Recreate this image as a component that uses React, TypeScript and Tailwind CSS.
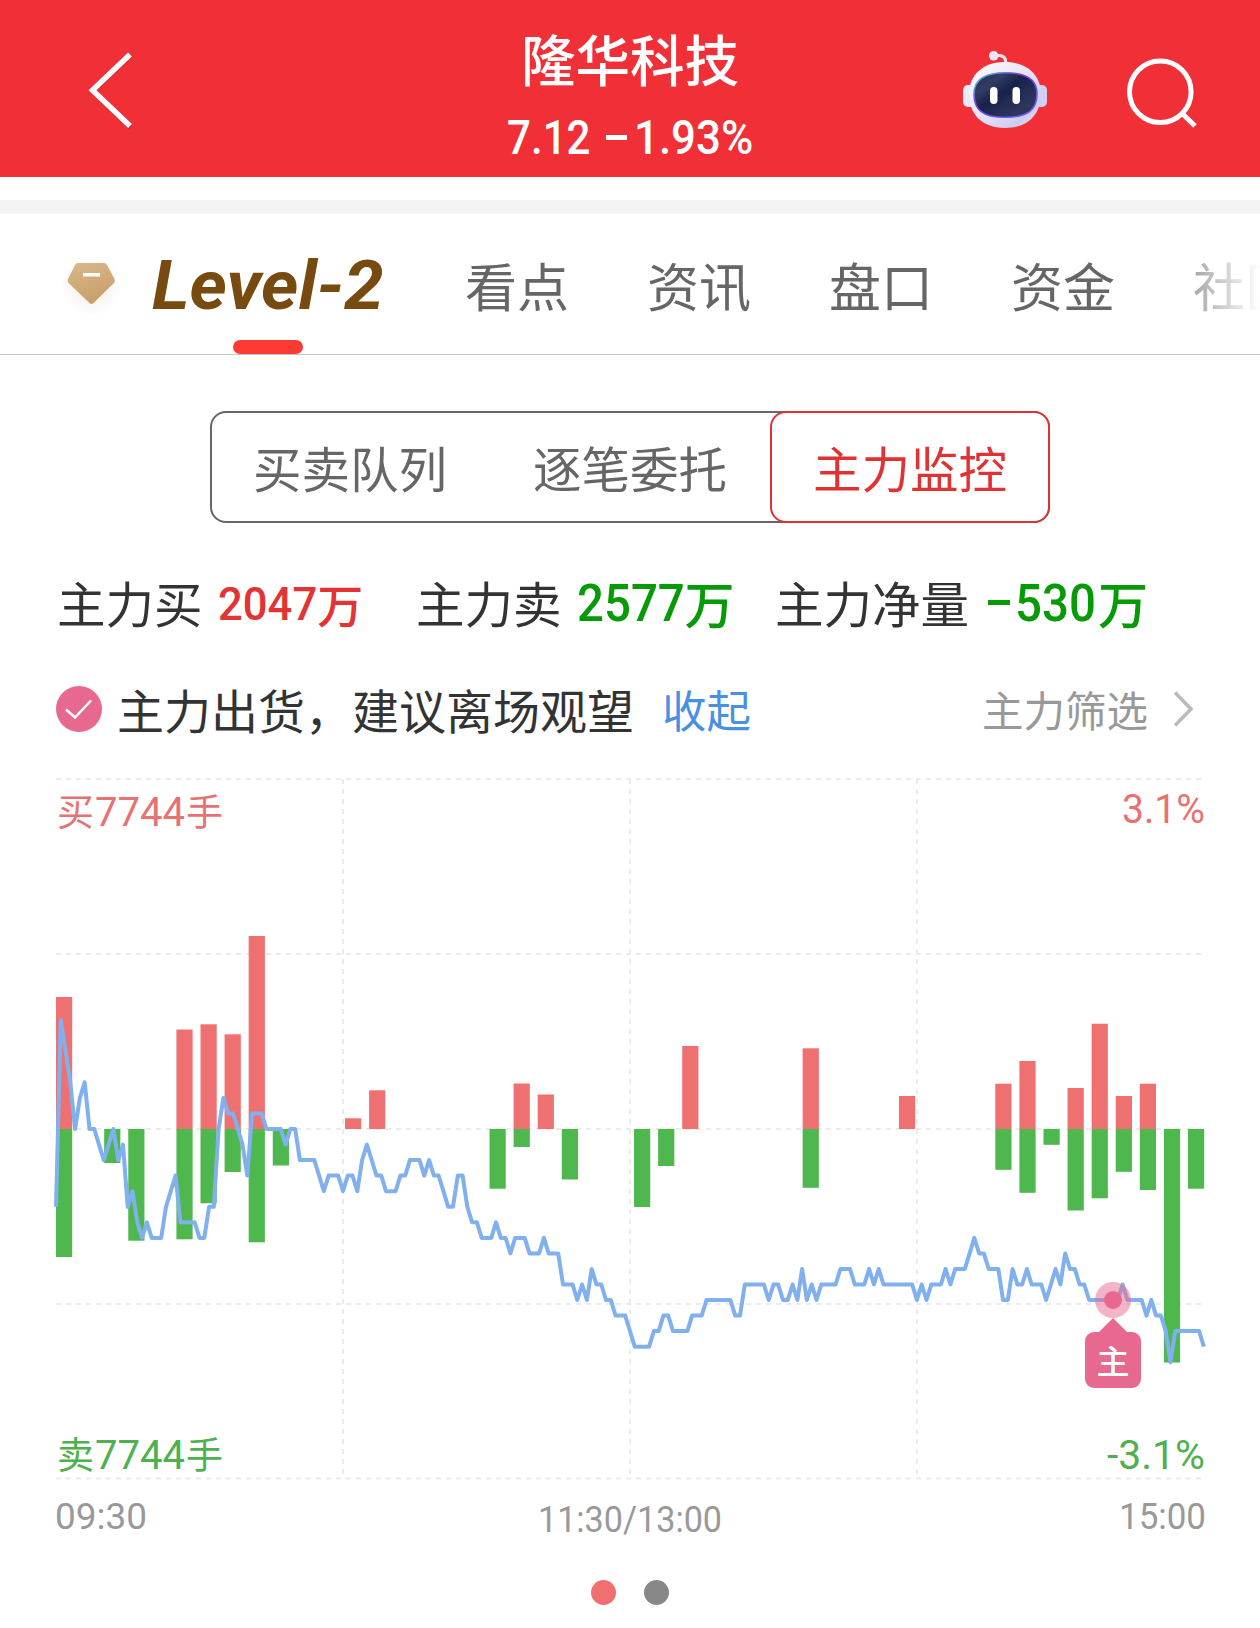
import React from "react";

const CJK = "font-['Noto_Sans_CJK_SC',sans-serif]";
const NUM = "font-['Roboto','Noto_Sans_CJK_SC',sans-serif]";

/* Price change per minute, in grid ticks from the previous close */
const ticks = [
  -5, 7, 5, 3, 0, 2, 3, 0, 0, -1, -2, -1, 0, -2, -1, -5, -4, -6, -7, -6,
  -7, -7, -7, -5, -4, -3, -6, -6, -6, -6, -7, -7, -5, -5, 0, 2, 1, 1, 0, -1,
  -3, 1, 1, 1, 0, 0, 0, 0, -1, 0, 0, -2, -2, -2, -2, -3, -4, -3, -3, -3,
  -4, -3, -3, -4, -2, -1, -2, -3, -3, -4, -4, -4, -3, -3, -2, -2, -2, -3, -2, -3,
  -3, -4, -5, -5, -3, -3, -5, -6, -6, -7, -7, -7, -6, -7, -7, -8, -7, -7, -7, -8,
  -8, -8, -7, -8, -8, -8, -10, -10, -10, -11, -10, -11, -9, -10, -10, -11, -11, -12, -12, -12,
  -13, -14, -14, -14, -14, -13, -13, -12, -12, -13, -13, -13, -13, -12, -12, -12, -11, -11, -11, -11,
  -11, -11, -12, -12, -10, -10, -10, -10, -10, -11, -10, -10, -11, -11, -10, -11, -9, -11, -10, -11,
  -10, -10, -10, -10, -9, -9, -9, -10, -10, -10, -9, -10, -9, -10, -10, -10, -10, -10, -10, -10,
  -11, -10, -11, -10, -10, -10, -9, -10, -9, -9, -9, -8, -7, -8, -8, -9, -9, -9, -11, -11,
  -9, -10, -10, -9, -10, -10, -10, -11, -10, -9, -10, -8, -9, -9, -10, -10, -11, -11, -11, -11,
  -11, -11, -11, -10, -11, -11, -11, -11, -12, -11, -12, -12, -13, -15, -13, -13, -13, -13, -13, -13,
  -14,
];

/* [slot, buy height, sell height] */
const bars: [number, number, number][] = [
  [0, 132, 128], [2, 0, 34], [3, 0, 111.7], [5, 99.5, 110.3], [6, 104.7, 74.3],
  [7, 94.7, 43], [8, 193, 113.3], [9, 0, 36.5], [12, 10.7, 0], [13, 38.7, 0],
  [18, 0, 59.7], [19, 45.5, 18], [20, 34.5, 0], [21, 0, 50.5], [24, 0, 78],
  [25, 0, 37], [26, 83, 0], [31, 80.7, 58.8], [35, 33, 0], [39, 45.3, 40.8],
  [40, 68, 63.8], [41, 0, 15.8], [42, 41, 81.5], [43, 105.3, 69.3], [44, 33, 42.8],
  [45, 45.3, 61], [46, 0, 233.5], [47, 0, 59.7],
];

const MID = 350;
const linePoints = ticks
  .map((t, i) => `${(i * 4.783).toFixed(1)},${(MID - t * 15.55).toFixed(1)}`)
  .join(" ");

function Robot() {
  return (
    <svg width="90" height="84" viewBox="960 48 90 84" className="block">
      <defs>
        <linearGradient id="shell" x1="0" y1="0" x2="1" y2="1">
          <stop offset="0" stopColor="#ffffff" />
          <stop offset="0.5" stopColor="#e6e2f5" />
          <stop offset="0.8" stopColor="#cfcbee" />
          <stop offset="1" stopColor="#f0edfb" />
        </linearGradient>
        <linearGradient id="rim" x1="0" y1="0" x2="1" y2="1">
          <stop offset="0" stopColor="#5fd6de" />
          <stop offset="0.4" stopColor="#7a35d8" />
          <stop offset="0.75" stopColor="#5b5cf0" />
          <stop offset="1" stopColor="#8a48e0" />
        </linearGradient>
        <linearGradient id="visor" x1="0" y1="0" x2="1" y2="1">
          <stop offset="0" stopColor="#222d52" />
          <stop offset="0.25" stopColor="#333c62" />
          <stop offset="0.45" stopColor="#17224b" />
          <stop offset="0.8" stopColor="#2f375f" />
          <stop offset="1" stopColor="#1d2550" />
        </linearGradient>
      </defs>
      <path d="M994 55.500h5c4.500 0 7 3 7 8" fill="none" stroke="#f3e9f7" strokeWidth="3.200" />
      <circle cx="993.700" cy="55.800" r="4.800" fill="#ece6f6" />
      <rect x="963" y="85" width="12" height="22" rx="5" fill="#ebe8f7" />
      <rect x="1035" y="85" width="12" height="22" rx="5" fill="#d3cff0" />
      <path d="M1005 62c22 0 36 13 36 32s-12 34-36 34-36-15-36-34 14-32 36-32z" fill="url(#shell)" />
      <path d="M1005.500 72.800c22 0 31.500 7 31.500 21 0 15-8 23.500-31.500 23.500S974 109 974 94c0-14 9.500-21.200 31.500-21.200z" fill="url(#visor)" stroke="url(#rim)" strokeWidth="1.600" />
      <rect x="990" y="87" width="7.500" height="17" rx="3.700" fill="#fff" />
      <rect x="1012.500" y="87" width="7.500" height="17" rx="3.700" fill="#fff" />
    </svg>
  );
}

function Header() {
  return (
    <header className="flex h-[177px] items-start bg-[#f12f37] text-white">
      <div className="w-[420px] pt-[48px] pl-[84px]">
        <svg width="56" height="84" viewBox="84 48 56 84" className="block">
          <path d="M130.500 55.500L93.500 92L130.500 128" fill="none" stroke="#b8232b" strokeOpacity="0.5" strokeWidth="5" />
          <path d="M130 54.500L92.500 90.300L130 126" fill="none" stroke="#fff" strokeWidth="5.500" />
        </svg>
      </div>
      <div className="flex w-[420px] flex-col items-center">
        <h1 className={`mt-[30px] text-[54.500px] leading-[56px] font-medium ${CJK}`}>隆华科技</h1>
        <div className={`mt-[27px] flex h-[50px] w-[246px] items-center text-[49px] leading-[50px] font-medium whitespace-nowrap ${NUM}`}>
          <span className="w-[99px]"><span className="inline-block origin-left scale-x-[0.86]">7.12</span></span>
          <span className="mb-[2px] h-[5px] w-[21px] bg-white" />
          <span className="ml-[7px] w-[116px]"><span className="inline-block origin-left scale-x-[0.895]">1.93%</span></span>
        </div>
      </div>
      <div className="flex w-[420px] items-start pt-[48px] pl-[120px]">
        <Robot />
        <svg width="80" height="84" viewBox="1122 48 80 84" className="ml-[72px] block">
          <circle cx="1160.300" cy="91.800" r="30.800" fill="none" stroke="#fff" strokeWidth="5" />
          <path d="M1182.500 113.700L1195 126" stroke="#fff" strokeWidth="5" />
        </svg>
      </div>
    </header>
  );
}

function Tabs() {
  return (
    <nav className="relative flex h-[141px] overflow-hidden border-b border-[#c4c4c4]">
      <div className="flex w-[465px] shrink-0 items-start pl-[56px]">
        <svg width="72" height="72" viewBox="56 248 72 72" className="mt-[34px] block">
          <defs>
            <linearGradient id="gem" x1="0" y1="0" x2="0.300" y2="1">
              <stop offset="0" stopColor="#d8b88c" />
              <stop offset="1" stopColor="#c9a06a" />
            </linearGradient>
            <radialGradient id="glow">
              <stop offset="0" stopColor="#f1ebe3" />
              <stop offset="1" stopColor="#ffffff" />
            </radialGradient>
          </defs>
          <circle cx="91" cy="286" r="30" fill="url(#glow)" />
          <path d="M78 263h26q2 0 3 2l7.500 14q1 2-.5 4l-20.500 20q-2 2-4 0L68.500 283q-1.500-2-.5-4l7-14q1-2 3-2z" fill="url(#gem)" />
          <rect x="83" y="273" width="17" height="3.500" fill="#fff" />
        </svg>
        <span className="mt-[37px] ml-[24px] origin-left scale-x-[1.05] text-[68px] leading-[70px] font-bold whitespace-nowrap text-[#774b10] italic font-['Roboto',sans-serif]">Level-2</span>
      </div>
      <div className={`mt-[43px] flex gap-[78px] text-[52px] leading-[56px] whitespace-nowrap text-[#666] ${CJK}`}>
        <span>看点</span>
        <span>资讯</span>
        <span>盘口</span>
        <span>资金</span>
        <span>社区</span>
      </div>
      <div className="absolute top-0 right-0 h-[139px] w-[70px] bg-linear-to-r from-white/40 to-white" />
      <div className="absolute bottom-0 left-[233px] h-[14px] w-[70px] rounded-full bg-[#fb3a33]" />
    </nav>
  );
}

function Segments() {
  return (
    <div className={`mx-auto mt-[56px] flex h-[112px] w-[840px] rounded-[16px] bg-white text-[48.500px] leading-none text-[#666] shadow-[inset_0_0_0_2px_#666] ${CJK}`}>
      <div className="flex w-[280px] items-center justify-center">买卖队列</div>
      <div className="flex w-[280px] items-center justify-center">逐笔委托</div>
      <div className="flex w-[280px] items-center justify-center rounded-[16px] border-2 border-[#dd3333] bg-white text-[#e03232]">主力监控</div>
    </div>
  );
}

function Stat({ label, value, unit, tone, minus, width }: { label: string; value: string; unit: string; tone: string; minus?: boolean; width: string }) {
  return (
    <div className={`flex items-center whitespace-nowrap ${width}`}>
      <span className={`text-[48.500px] text-[#333] ${CJK}`}>{label}</span>
      <span className={`ml-[15px] flex items-center text-[51px] font-medium ${tone}`}>
        {minus && <span className="mr-[5px] ml-[4px] h-[5px] w-[22px] bg-current" />}
        <span className={`inline-block origin-left ${minus ? "w-[83px]" : "w-[108px]"}`}>
          <span className={`inline-block origin-left scale-x-[0.93] ${NUM}`}>{value}</span>
        </span>
        <span className={`text-[50px] ${CJK}`}>{unit}</span>
      </span>
    </div>
  );
}

function Chart() {
  return (
    <svg width="1260" height="780" viewBox="-56 -4 1260 780" className="block">
      <g stroke="#ebebeb" strokeWidth="2" strokeDasharray="5 5">
        {[0, 175, 350, 525, 699.500].map((y) => (
          <path key={y} d={`M0 ${y}H1148`} />
        ))}
        {[287, 574, 861].map((x) => (
          <path key={x} d={`M${x} 0V700`} />
        ))}
      </g>
      {bars.map(([k, up, down]) => (
        <g key={k}>
          <rect x={k * 24.085} y={MID - up} width="16.200" height={up} fill="#ef7070" />
          <rect x={k * 24.085} y={MID} width="16.200" height={down} fill="#4eb74e" />
        </g>
      ))}
      <polyline points={linePoints} fill="none" stroke="#80b0ee" strokeWidth="4" strokeLinejoin="round" />
      <circle cx="1057" cy="521" r="18" fill="#e8698f" fillOpacity="0.5" />
      <circle cx="1057" cy="521" r="9" fill="#e8698f" />
      <path d="M1057 539L1072 554H1042z" fill="#e8698f" />
      <rect x="1029" y="553" width="56" height="56" rx="9" fill="#e8698f" />
      <text x="1057" y="595" textAnchor="middle" fontSize="33" fontWeight="500" fill="#fff" className={CJK}>主</text>
      <g fill="#e87272" className={CJK}>
        <text x="1" y="47" fontSize="37">买</text>
        <text x="39" y="47" fontSize="40" textLength="90" lengthAdjust="spacingAndGlyphs" className="font-['Roboto',sans-serif]">7744</text>
        <text x="130" y="47" fontSize="37">手</text>
        <text x="1149" y="44" fontSize="41" textAnchor="end" textLength="83" lengthAdjust="spacingAndGlyphs" className="font-['Roboto',sans-serif]">3.1%</text>
      </g>
      <g fill="#4eb04e" className={CJK}>
        <text x="1" y="690" fontSize="37">卖</text>
        <text x="39" y="690" fontSize="40" textLength="90" lengthAdjust="spacingAndGlyphs" className="font-['Roboto',sans-serif]">7744</text>
        <text x="130" y="690" fontSize="37">手</text>
        <text x="1149" y="690" fontSize="41" textAnchor="end" textLength="98" lengthAdjust="spacingAndGlyphs" className="font-['Roboto',sans-serif]">-3.1%</text>
      </g>
      <g fill="#999" fontSize="37" className="font-['Roboto',sans-serif]">
        <text x="-1" y="750" textLength="92" lengthAdjust="spacingAndGlyphs">09:30</text>
        <text x="574" y="753" textAnchor="middle" textLength="184" lengthAdjust="spacingAndGlyphs">11:30/13:00</text>
        <text x="1150" y="750" textAnchor="end" textLength="87" lengthAdjust="spacingAndGlyphs">15:00</text>
      </g>
    </svg>
  );
}

export default function App() {
  return (
    <div className="h-[1628px] w-[1260px] overflow-hidden bg-white">
      <Header />
      <div className="mt-[23px] h-[14px] bg-[#f4f4f4]" />
      <Tabs />
      <Segments />
      <div className="mt-[47px] flex h-[64px] pl-[57px] leading-[64px]">
        <Stat label="主力买" value="2047" unit="万" tone="text-[#e23434] scale-[0.92] origin-left" width="w-[359px]" />
        <Stat label="主力卖" value="2577" unit="万" tone="text-[#069a06]" width="w-[359px]" />
        <Stat label="主力净量" value="530" unit="万" tone="text-[#069a06]" minus width="w-[400px]" />
      </div>
      <div className={`mt-[43px] flex h-[64px] items-center pr-[64px] pl-[56px] leading-[64px] whitespace-nowrap ${CJK}`}>
        <svg width="46" height="46" viewBox="0 0 46 46" className="block shrink-0">
          <circle cx="23" cy="23" r="23" fill="#e8698f" />
          <path d="M10 23.500L19 31.500L35 14.500" fill="none" stroke="#fff" strokeWidth="2.500" />
        </svg>
        <span className="ml-[15px] text-[47px] text-[#333]">主力出货，建议离场观望</span>
        <span className="ml-[28px] text-[44.500px] text-[#4a90e2]">收起</span>
        <span className="ml-auto text-[41.500px] text-[#999]">主力筛选</span>
        <svg width="24" height="40" viewBox="0 0 24 40" className="ml-[24px] block">
          <path d="M3 3.500L19 20L3 36.500" fill="none" stroke="#bbb" strokeWidth="3.500" />
        </svg>
      </div>
      <div className="mt-[34px]">
        <Chart />
      </div>
      <div className="mt-[25px] flex justify-center gap-[28px]">
        <span className="size-[25px] rounded-full bg-[#f07070]" />
        <span className="size-[25px] rounded-full bg-[#888]" />
      </div>
    </div>
  );
}
